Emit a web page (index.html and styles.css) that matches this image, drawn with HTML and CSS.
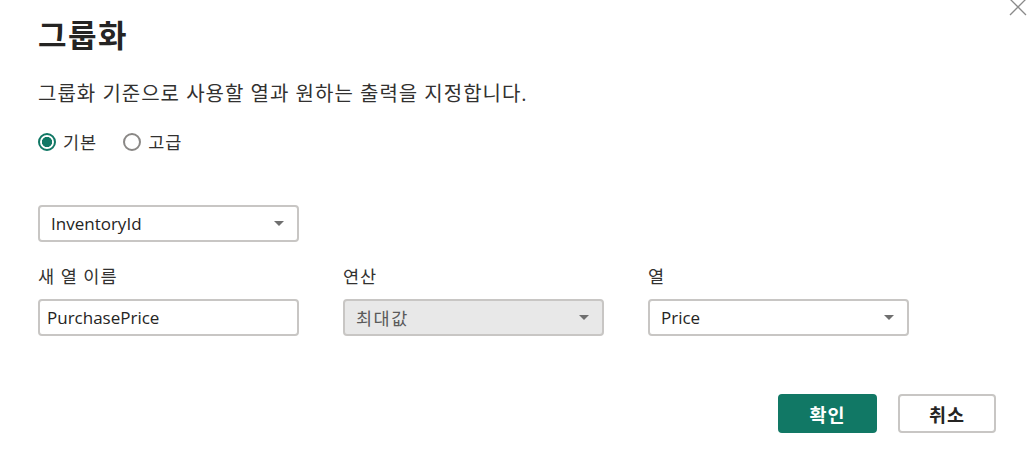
FILE: index.html
```html
<!DOCTYPE html>
<html lang="ko">
<head>
<meta charset="utf-8">
<link rel="stylesheet" href="styles.css">
</head>
<body>
<div class="dialog">
  <svg class="close" width="18" height="18" viewBox="0 0 18 18"><path d="M1 1L17 17M17 1L1 17" stroke="#8a8a8a" stroke-width="1.3" fill="none"/></svg>
  <h1 class="title">그룹화</h1>
  <p class="desc">그룹화 기준으로 사용할 열과 원하는 출력을 지정합니다.</p>
  <div class="radios">
    <label class="radio"><span class="dot checked"></span>기본</label>
    <label class="radio"><span class="dot"></span>고급</label>
  </div>
  <div class="select first"><span>InventoryId</span><span class="arrow"></span></div>
  <div class="grid">
    <div class="label">새 열 이름</div>
    <div class="label">연산</div>
    <div class="label">열</div>
    <div class="field"><span>PurchasePrice</span></div>
    <div class="select disabled"><span class="ko">최대값</span><span class="arrow"></span></div>
    <div class="select"><span>Price</span><span class="arrow"></span></div>
  </div>
  <div class="actions">
    <button class="btn primary">확인</button>
    <button class="btn">취소</button>
  </div>
</div>
</body>
</html>
```
FILE: styles.css
```css
html, body { margin: 0; padding: 0; background: #fff; }
body { font-family: "Open Sans", "Noto Sans CJK KR", sans-serif; color: #252423; }
.dialog { position: relative; width: 1033px; height: 468px; box-sizing: border-box; padding: 16px 37px 0 38px; }
.close { position: absolute; left: 1009px; top: -2px; }
.title { margin: 0; font-family: "Noto Sans CJK KR", sans-serif; font-size: 31px; line-height: 36px; font-weight: 700; letter-spacing: 1.5px; color: #252423; }
.desc { margin: 28px 0 0; font-size: 20px; line-height: 28px; letter-spacing: 1px; color: #323130; }
.radios { margin-top: 22px; height: 24px; display: flex; align-items: center; gap: 26px; }
.radio { display: flex; align-items: center; gap: 7px; font-size: 17.5px; line-height: 24px; letter-spacing: 1px; color: #323130; }
.dot { width: 18px; height: 18px; box-sizing: border-box; border: 2px solid #8a8886; border-radius: 50%; display: inline-block; background: #fff; }
.dot.checked { border-color: #117865; background: radial-gradient(circle, #117865 0 4.8px, #fff 5.4px); }
.select, .field { height: 37px; box-sizing: border-box; border: 2px solid #c8c6c4; border-radius: 4px; display: flex; align-items: center; justify-content: space-between; font-size: 17px; color: #252423; background: #fff; }
.select { padding: 0 11px 0 11px; }
.field { padding: 0 7px; }
.select.first { width: 261px; margin-top: 51px; }
.select.disabled { background: #e8e8e8; color: #5a5a5a; }
.ko { font-family: "Noto Sans CJK KR", sans-serif; font-size: 17.5px; letter-spacing: 1.5px; }
.arrow { width: 0; height: 0; border-left: 5px solid transparent; border-right: 5px solid transparent; border-top: 5px solid #6f6f6f; margin-right: 2px; }
.grid { margin-top: 22px; display: grid; grid-template-columns: 261px 261px 261px; column-gap: 44px; row-gap: 11px; }
.label { font-size: 17.5px; line-height: 24px; letter-spacing: 1px; color: #323130; }
.actions { margin-top: 58px; display: flex; justify-content: flex-end; gap: 21px; }
.btn { height: 39px; width: 98px; box-sizing: border-box; border: 2px solid #c8c6c4; border-radius: 4px; background: #fff; font-family: "Noto Sans CJK KR", sans-serif; font-weight: 700; font-size: 18.5px; letter-spacing: 1px; color: #252423; padding: 0; }
.btn.primary { width: 99px; background: #117865; border-color: #117865; color: #fff; }
```
